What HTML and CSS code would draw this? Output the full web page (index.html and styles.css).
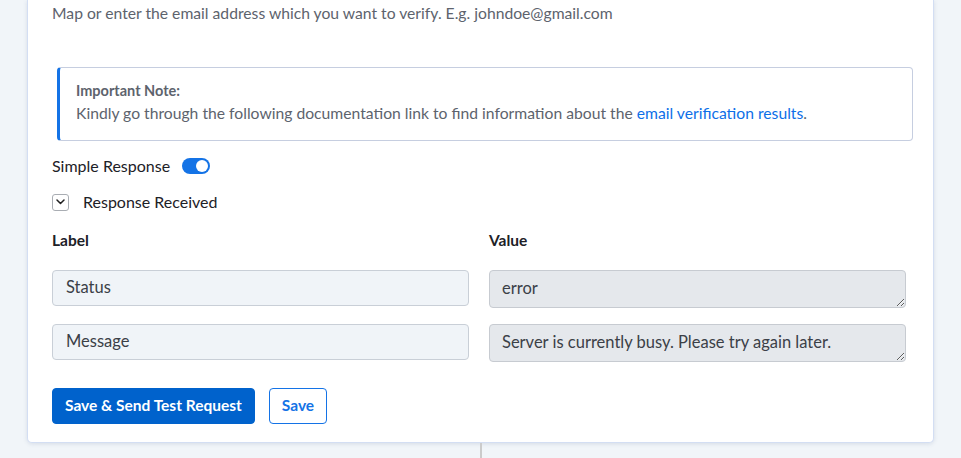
FILE: index.html
```html
<!DOCTYPE html>
<html lang="en">
<head>
    <meta charset="UTF-8">
    <meta name="viewport" content="width=device-width, initial-scale=1.0">
    <title>Email Verification</title>
    <link rel="stylesheet" href="styles.css">
</head>
<body>
    <div class="page">
        <div class="card">
            <p class="help-text">Map or enter the email address which you want to verify. E.g. johndoe@gmail.com</p>

            <div class="note">
                <div class="note-title">Important Note:</div>
                <div class="note-text">Kindly go through the following documentation link to find information about the <a href="#">email verification results</a>.</div>
            </div>

            <div class="switch-row">
                <span>Simple Response</span>
                <span class="switch on"><span class="knob"></span></span>
            </div>

            <div class="collapse-row">
                <span class="collapse-btn">
                    <svg width="9" height="6" viewBox="0 0 9 6"><path d="M1 1l3.5 3.5L8 1" fill="none" stroke="#222" stroke-width="1.5" stroke-linecap="round" stroke-linejoin="round"/></svg>
                </span>
                <span>Response Received</span>
            </div>

            <div class="response-grid">
                <div class="col-head">Label</div>
                <div class="col-head">Value</div>

                <input class="field" type="text" value="Status" readonly>
                <textarea class="value-box" readonly>error</textarea>

                <input class="field" type="text" value="Message" readonly>
                <textarea class="value-box" readonly>Server is currently busy. Please try again later.</textarea>
            </div>

            <div class="actions">
                <button class="btn btn-primary">Save &amp; Send Test Request</button>
                <button class="btn btn-outline">Save</button>
            </div>
        </div>
        <div class="connector"></div>
    </div>
</body>
</html>
```

FILE: styles.css
```css
body {
    margin: 0;
    background-color: #f1f5f9;
    font-family: Lato, "Open Sans", sans-serif;
    color: #1d2127;
    height: 458px;
    overflow: hidden;
}
.page {
    padding: 0 27px;
}
.card {
    background-color: #fff;
    border: 1px solid #d3def3;
    border-top: none;
    border-radius: 0 0 5px 5px;
    box-shadow: 0 1px 4px rgba(90, 110, 150, 0.18);
    padding: 2px 27px 18px 24px;
}
.help-text {
    margin: 0;
    font-size: 15.7px;
    line-height: 22px;
    color: #5d636d;
}
.note {
    margin: 43px -7px 0 5px;
    border: 1px solid #c6cee0;
    border-left: 3px solid #1473e6;
    border-radius: 4px;
    padding: 14px 16px 16px 16px;
    color: #5d636d;
}
.note-title {
    font-size: 14.5px;
    font-weight: bold;
    line-height: 18px;
}
.note-text {
    font-size: 15.7px;
    line-height: 22px;
    margin-top: 2px;
}
.note-text a {
    color: #0d6fe8;
    text-decoration: none;
}
.switch-row {
    display: flex;
    align-items: center;
    gap: 12px;
    margin-top: 14px;
    font-size: 16px;
    line-height: 22px;
}
.switch {
    display: inline-flex;
    width: 28px;
    height: 16px;
    border-radius: 8px;
    background-color: #1473e6;
    box-sizing: border-box;
    padding: 2px;
    justify-content: flex-end;
}
.knob {
    width: 12px;
    height: 12px;
    border-radius: 50%;
    background-color: #fff;
}
.collapse-row {
    display: flex;
    align-items: center;
    gap: 14px;
    margin-top: 14px;
    font-size: 16px;
    line-height: 22px;
}
.collapse-btn {
    width: 17px;
    height: 17px;
    box-sizing: border-box;
    border: 1px solid #a9adb3;
    border-radius: 3px;
    display: flex;
    align-items: center;
    justify-content: center;
}
.response-grid {
    display: grid;
    grid-template-columns: 417px 417px;
    column-gap: 20px;
    row-gap: 16px;
    margin-top: 17px;
}
.col-head {
    font-size: 15.5px;
    font-weight: bold;
    line-height: 20px;
    margin-bottom: 4px;
}
.field,
.value-box {
    box-sizing: border-box;
    width: 100%;
    margin: 0;
    border-radius: 4px;
    font-family: Lato, "Open Sans", sans-serif;
    font-size: 16.5px;
    color: #3b4047;
    outline: none;
}
.field {
    height: 36px;
    padding: 0 13px 3px;
    background-color: #f0f4f8;
    border: 1px solid #c9cfd7;
    align-self: start;
}
.value-box {
    height: 38px;
    padding: 6px 12px;
    line-height: 22px;
    background-color: #e5e8ec;
    border: 1px solid #c7cbd1;
    resize: vertical;
    overflow: hidden;
}
.actions {
    display: flex;
    gap: 14px;
    margin-top: 26px;
}
.btn {
    height: 36px;
    border-radius: 4px;
    font-family: Lato, "Open Sans", sans-serif;
    font-size: 15.5px;
    font-weight: bold;
    cursor: pointer;
    padding: 0 12px 3px;
}
.btn-primary {
    background-color: #0062cc;
    border: 1px solid #0062cc;
    color: #fff;
}
.btn-outline {
    background-color: #fff;
    border: 1px solid #1473e6;
    color: #1473e6;
}
.connector {
    width: 2px;
    height: 20px;
    margin-left: 453px;
    background-color: #cbcbcb;
}
```
